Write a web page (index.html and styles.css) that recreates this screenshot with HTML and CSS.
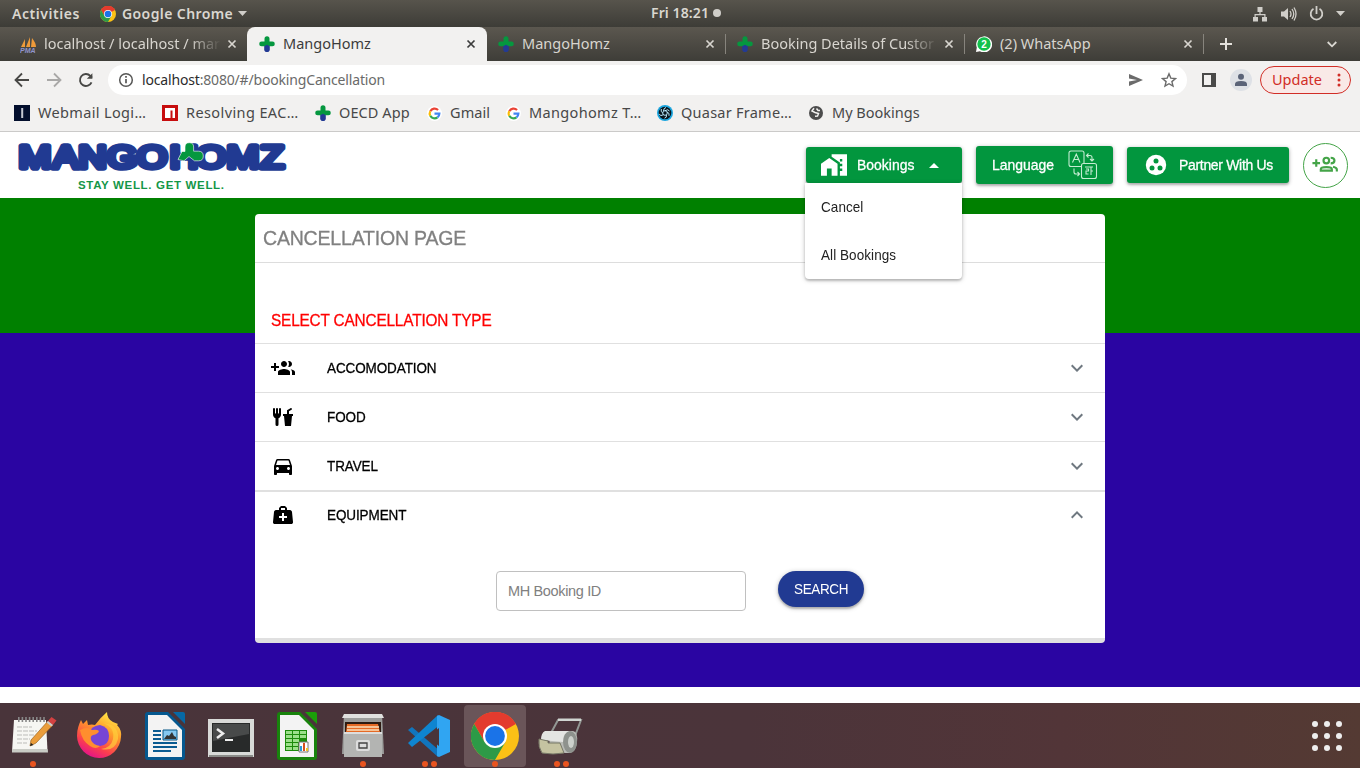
FILE: index.html
```html
<!DOCTYPE html>
<html lang="en">
<head>
<meta charset="utf-8">
<title>MangoHomz</title>
<link rel="stylesheet" href="styles.css">
</head>
<body>
<svg class="defs" width="0" height="0">
  <defs>
    <symbol id="clover" viewBox="0 0 16 16"><rect x="5.200" y="7" width="5.600" height="9" rx="2.800" fill="#233a94"/><path d="M5.500 5.500V2.800a2.500 2.500 0 0 1 5 0v2.700H13.400a2.400 2.400 0 0 1 0 4.800H11L8 8.800 5 10.300H2.600a2.400 2.400 0 0 1 0-4.800z" fill="#05973f"/></symbol>
    <symbol id="close" viewBox="0 0 10 10"><path d="M1.500 1.500l7 7m0-7l-7 7" fill="none" stroke="currentColor" stroke-width="1.700"/></symbol>
    <symbol id="chrome" viewBox="0 0 48 48"><circle cx="24" cy="24" r="24" fill="#fbc116"/><path d="M24 24L3.200 12A24 24 0 0 1 44.800 12z" fill="#e33b2e"/><path d="M24 12h20.800A24 24 0 0 0 3.200 12L13.600 30z" fill="#e33b2e"/><path d="M3.200 12A24 24 0 0 0 24 48L34.400 30 24 24 13.600 30z" fill="#2d9a47"/><circle cx="24" cy="24" r="12" fill="#fff"/><circle cx="24" cy="24" r="9.900" fill="#1a73e8"/></symbol>
    <symbol id="google" viewBox="0 0 16 16"><circle cx="8" cy="8" r="8" fill="#fff"/><g fill="none" stroke-width="2.300"><path d="M11.800 4.300A5.200 5.200 0 0 0 3.500 5.500" stroke="#ea4335"/><path d="M3.500 5.500a5.200 5.200 0 0 0 0 5" stroke="#fbbc05"/><path d="M3.500 10.500a5.200 5.200 0 0 0 7.700 1.600" stroke="#34a853"/><path d="M11.200 12.100A5.200 5.200 0 0 0 13.200 8.200H8" stroke="#4285f4"/></g></symbol>
    <symbol id="chev" viewBox="0 0 24 24"><path d="M16.590 8.590L12 13.170 7.410 8.590 6 10l6 6 6-6z" fill="currentColor"/></symbol>
  </defs>
</svg>

<div class="topbar">
  <span class="t-activities">Activities</span>
  <svg class="i16" width="16" height="16"><use href="#chrome"/></svg>
  <span class="t-app">Google Chrome</span>
  <svg width="9" height="5"><path d="M0 0h9L4.500 5z" fill="#d0cec9"/></svg>
  <div class="clock"><span>Fri 18:21</span><i></i></div>
  <div class="tray">
    <svg width="16" height="16" viewBox="0 0 16 16" fill="#d0cec9"><path d="M5.500 1h5v5H8.600v2H13.500v3H15v4.500h-5V11h2.300V9.200H3.700V11H6v4.500H1V11h1.500V8h4.900V6H5.500z"/></svg>
    <svg width="17" height="16" viewBox="0 0 17 16"><path d="M1 5.500h3L8 2v12L4 10.500H1z" fill="#d0cec9"/><path d="M10 5q2 3 0 6M12 3q3.500 5 0 10M14 1.500q4 6.500 0 13" fill="none" stroke="#d0cec9" stroke-width="1.300"/></svg>
    <svg width="15" height="16" viewBox="0 0 15 16" fill="none" stroke="#d0cec9" stroke-width="1.800"><path d="M4.500 2.800a5.800 5.800 0 1 0 6 0M7.500 0v8"/></svg>
    <svg width="9" height="5"><path d="M0 0h9L4.500 5z" fill="#d0cec9"/></svg>
  </div>
</div>

<div class="tabs">
  <div class="tab tab1">
    <svg class="fav" width="17" height="17" viewBox="0 0 17 17"><path d="M1 11l4-8v8zM6 11l4-10v10zM11 11l1-9q4 5 4 9z" fill="#ee9a3a"/><text x="0" y="16.500" class="pma">PMA</text></svg>
    <span class="tt fade w1">localhost / localhost / mar</span>
    <svg class="x" width="10" height="10"><use href="#close"/></svg>
  </div>
  <div class="tab active">
    <svg class="fav" width="16" height="16"><use href="#clover"/></svg>
    <span class="tt">MangoHomz</span>
    <svg class="x" width="10" height="10"><use href="#close"/></svg>
  </div>
  <div class="tab tab3">
    <svg class="fav" width="16" height="16"><use href="#clover"/></svg>
    <span class="tt">MangoHomz</span>
    <svg class="x" width="10" height="10"><use href="#close"/></svg>
  </div>
  <div class="tab tab4">
    <svg class="fav" width="16" height="16"><use href="#clover"/></svg>
    <span class="tt fade w4">Booking Details of Custor</span>
    <svg class="x" width="10" height="10"><use href="#close"/></svg>
  </div>
  <div class="tab tab5">
    <svg class="fav" width="16" height="16" viewBox="0 0 16 16"><path d="M0 16l.8-4.500A8 8 0 1 1 4 15.200z" fill="#fff"/><circle cx="8" cy="8" r="6.700" fill="#12c14c"/><text x="5.300" y="11.500" class="two">2</text></svg>
    <span class="tt">(2) WhatsApp</span>
    <svg class="x" width="10" height="10"><use href="#close"/></svg>
  </div>
  <svg class="plus" width="12" height="12"><path d="M6 0v12M0 6h12" stroke="#e4e1dc" stroke-width="2"/></svg>
  <svg class="more" width="10" height="7"><path d="M.7 1L5 5.300 9.300 1" fill="none" stroke="#dad8d2" stroke-width="1.800"/></svg>
</div>

<div class="toolbar">
  <svg width="16" height="16" fill="none" stroke="#484846" stroke-width="1.800"><path d="M15 8H2M8 1.500L1.500 8 8 14.500"/></svg>
  <svg width="16" height="16" fill="none" stroke="#a9a8a7" stroke-width="1.800"><path d="M1 8h13M8 1.500L14.500 8 8 14.500"/></svg>
  <svg width="16" height="16" fill="none" stroke="#484846" stroke-width="1.900"><path d="M13.500 10.300A6 6 0 1 1 12.300 3.800L14 5.600"/><path d="M14.400 1.200v5.600H8.800z" fill="#484846" stroke="none"/></svg>
  <div class="omni">
    <svg width="16" height="16" fill="none" stroke="#575756" stroke-width="1.500"><circle cx="8" cy="8" r="6.300"/><path d="M8 7v4.300M8 4v1.700" stroke-width="1.700"/></svg>
    <span class="url"><b>localhost</b>:8080/#/bookingCancellation</span>
    <svg class="send" width="16" height="14"><path d="M1 1l14 6L1 13V8.500L9 7 1 5.500z" fill="#6b6b6b"/></svg>
    <svg width="16" height="16" viewBox="0 0 16 16"><path d="M8 1.800l1.800 4.300 4.700.4-3.600 3.100 1.100 4.500L8 11.700l-4 2.400 1.100-4.500-3.600-3.100 4.700-.4z" fill="none" stroke="#6b6b6b" stroke-width="1.400"/></svg>
  </div>
  <svg class="panel" width="14" height="14"><path d="M1 1h12v12H1z" fill="none" stroke="#4a4a49" stroke-width="2"/><path d="M9 0h5v14H9z" fill="#4a4a49"/></svg>
  <svg class="avatar" width="22" height="22"><circle cx="11" cy="11" r="11" fill="#dee1e6"/><circle cx="11" cy="7.800" r="3" fill="#5a6378"/><path d="M5 17v-2q0-3 6-3t6 3v2z" fill="#5a6378"/></svg>
  <div class="update"><span>Update</span><svg width="4" height="14" fill="#d12d26"><circle cx="2" cy="2" r="1.500"/><circle cx="2" cy="7" r="1.500"/><circle cx="2" cy="12" r="1.500"/></svg></div>
</div>

<div class="marks">
  <div class="mark m1"><svg width="16" height="16"><path d="M0 0h16v16H0z" fill="#030f2d"/><path d="M7.200 3h2v10h-2z" fill="#c4c8d2"/></svg><span>Webmail Logi…</span></div>
  <div class="mark m2"><svg width="16" height="16"><path d="M0 0h16v16H0z" fill="#c70d0e"/><path d="M3 3h10v10h-2.500V5.500h-2V13H3z" fill="#fff"/></svg><span>Resolving EAC…</span></div>
  <div class="mark m3"><svg width="16" height="16"><use href="#clover"/></svg><span>OECD App</span></div>
  <div class="mark m4"><svg width="15" height="15"><use href="#google"/></svg><span>Gmail</span></div>
  <div class="mark m5"><svg width="15" height="15"><use href="#google"/></svg><span>Mangohomz T…</span></div>
  <div class="mark m6"><svg width="16" height="16" viewBox="0 0 16 16"><circle cx="8" cy="8" r="8" fill="#1ba6df"/><circle cx="8" cy="8" r="6.300" fill="#06131c"/><g fill="none" stroke="#b9e9fb" stroke-width="1"><circle cx="8" cy="8" r="2.300"/><path d="M8 5.700q3-2 4.500.3M10 7q3 1 2 3.800M9.500 9.800q.5 3-2 3.400M6.500 9.700q-3 2-4.300-.5M5.800 8q-2.500-1-1.500-4M6.500 6q0-3 2.500-3.500"/></g></svg><span>Quasar Frame…</span></div>
  <div class="mark m7"><svg width="14" height="14" viewBox="0 0 14 14"><circle cx="7" cy="7" r="7" fill="#4c4c4c"/><path d="M5 2.200L3 5l3 1.500 3.500 1-1 2.500-2.500.3M7.500 2.500L9 4.500h2" fill="none" stroke="#f2f1f0" stroke-width="1.500"/></svg><span>My Bookings</span></div>
</div>

<header class="site">
  <svg class="logo" width="300" height="66" viewBox="0 0 300 66">
    <g transform="scale(1.250 1)"><text y="36" x="28 52.600 74 97.600 121.600 147.200 168.800 194.400 217.600" class="brand">MANGOHOMZ</text></g>
    <path d="M178 27.500l4-8h3V15q0-4.300 4.300-4.300t4.300 4.300v4.200h4.900q4.800 0 4.800 4.800t-4.800 4.800h-4l-5.500-4.300-5 4.300z" fill="#05973f" stroke="#fff" stroke-width=".6"/>
    <text x="78" y="57" class="tagline" textLength="146">STAY WELL. GET WELL.</text>
  </svg>
  <div class="booking">
    <button class="btn b-book"><svg width="26" height="24" viewBox="1 2 22 20" fill="#fff"><path d="M1 11v10h5v-6h4v6h5V11L8 6z"/><path fill-rule="evenodd" d="M10 3v1.970l7 5V11h2v2h-2v2h2v2h-2v4h6V3zm9 6h-2V7h2z"/></svg><span class="cond">Bookings</span><svg width="10" height="5"><path d="M0 5h10L5 0z" fill="#fff"/></svg></button>
    <div class="menu"><div><span class="cond">Cancel</span></div><div><span class="cond">All Bookings</span></div></div>
  </div>
  <button class="btn b-lang"><span class="cond">Language</span>
    <svg width="30" height="30" viewBox="0 0 30 30" fill="none" stroke="#c4ecd1" stroke-width="1.100"><path d="M14 16.500H3a2 2 0 0 1-2-2V3a2 2 0 0 1 2-2h11a2 2 0 0 1 2 2v10M4.500 12.500L8.300 4 12 12.500M6 9.500h4.800"/><rect x="13.500" y="13.500" width="15" height="15" rx="2"/><path d="M17 17h8M23 17v8M18 19h2.500v2H18v3h2.500M23 21h2M18.500 5.500H22a2 2 0 0 1 2 2V11M20.500 3.500l-2 2 2 2M22 9l2 2 2-2M6 18.500v3.500a2 2 0 0 0 2 2h3M9.500 22l2 2-2 2"/></svg>
  </button>
  <button class="btn b-partner"><svg width="24" height="24" viewBox="0 0 24 24"><circle cx="12" cy="12" r="10.200" fill="#fff"/><g fill="#02963e"><circle cx="12" cy="8" r="2.500"/><circle cx="8" cy="15" r="2.500"/><circle cx="16" cy="15" r="2.500"/></g></svg><span class="cond">Partner With Us</span></button>
  <div class="round"><svg width="30" height="26" viewBox="0 0 26 24" fill="none" stroke="#44a448" stroke-width="2"><path d="M4 5.800v7M.5 9.300h7"/><circle cx="13.300" cy="7" r="2.600"/><path d="M8.200 16.200V15c0-2.600 10.200-2.600 10.200 0v1.200zM17.300 4.400q3.500 0 3.500 2.600t-3.500 2.600M19.500 12.700q3.500 1 3.500 2.500V17"/></svg></div>
</header>

<main class="stage">
  <section class="card">
    <h1><span class="cond">CANCELLATION PAGE</span></h1>
    <h2><span class="cond">SELECT CANCELLATION TYPE</span></h2>
    <div class="row"><svg class="ic" width="24" height="24" viewBox="0 0 24 24"><path d="M8 10H5V7H3v3H0v2h3v3h2v-3h3v-2zm10 1c1.660 0 2.990-1.340 2.990-3S19.660 5 18 5c-.32 0-.63.05-.91.14.57.81.9 1.790.9 2.860s-.34 2.040-.9 2.860c.28.09.59.14.91.14zm-5 0c1.660 0 2.990-1.340 2.990-3S14.660 5 13 5s-3 1.340-3 3 1.340 3 3 3zm6.620 2.160c.83.73 1.380 1.660 1.380 2.840v3h3v-3c0-1.540-2.370-2.490-4.380-2.840zM13 13c-2 0-6 1-6 3v3h12v-3c0-2-4-3-6-3z"/></svg><span class="cond">ACCOMODATION</span><svg class="ch" width="24" height="24"><use href="#chev"/></svg></div>
    <div class="row"><svg class="ic" width="24" height="24" viewBox="0 0 24 24"><path d="M3 3A1 1 0 0 0 2 4V8L2 9.500C2 11.190 3.030 12.630 4.500 13.220V19.500A1.500 1.500 0 0 0 6 21A1.500 1.500 0 0 0 7.500 19.500V13.220C8.970 12.630 10 11.190 10 9.500V8L10 4A1 1 0 0 0 9 3A1 1 0 0 0 8 4V8A.5.5 0 0 1 7.500 8.500A.5.5 0 0 1 7 8V4A1 1 0 0 0 6 3A1 1 0 0 0 5 4V8A.5.5 0 0 1 4.500 8.500A.5.5 0 0 1 4 8V4A1 1 0 0 0 3 3M19.880 3C19.750 3 19.620 3.090 19.500 3.160L16 5.250V9H12V11H13L14 21H20L21 11H22V9H18V6.340L20.500 4.840C21 4.560 21.130 4 20.840 3.500C20.630 3.140 20.260 2.950 19.880 3Z"/></svg><span class="cond">FOOD</span><svg class="ch" width="24" height="24"><use href="#chev"/></svg></div>
    <div class="row"><svg class="ic" width="24" height="24" viewBox="0 0 24 24"><path d="M18.920 6.010C18.720 5.420 18.160 5 17.500 5h-11c-.66 0-1.210.42-1.420 1.010L3 12v8c0 .55.45 1 1 1h1c.55 0 1-.45 1-1v-1h12v1c0 .55.45 1 1 1h1c.55 0 1-.45 1-1v-8l-2.080-5.990zM6.500 16c-.83 0-1.500-.67-1.500-1.500S5.670 13 6.500 13s1.500.67 1.500 1.500S7.330 16 6.500 16zm11 0c-.83 0-1.500-.67-1.500-1.500s.67-1.500 1.500-1.500 1.500.67 1.500 1.500-.67 1.500-1.500 1.500zM5 11l1.500-4.500h11L19 11H5z"/></svg><span class="cond">TRAVEL</span><svg class="ch" width="24" height="24"><use href="#chev"/></svg></div>
    <div class="row open"><svg class="ic" width="24" height="24" viewBox="0 0 24 24"><path d="M10 3L8 5V7H5C3.850 7 3.120 8 3 9L2 19C1.880 20 2.540 21 4 21H20C21.460 21 22.120 20 22 19L21 9C20.880 8 20.060 7 19 7H16V5L14 3H10M10 5H14V7H10V5M11 10H13V13H16V15H13V18H11V15H8V13H11V10Z"/></svg><span class="cond">EQUIPMENT</span><svg class="ch" width="24" height="24"><use href="#chev"/></svg></div>
    <div class="form"><input class="field" type="text" placeholder="MH Booking ID"><button class="search"><span class="cond">SEARCH</span></button></div>
  </section>
</main>

<footer class="dock">
  <div class="app"><svg width="48" height="48" viewBox="0 0 48 48"><path d="M5 8h32l1.500 31.500H3z" fill="#f6f6f3"/><path d="M3 37h35.500l.5 3.500H3z" fill="#c9cbc5"/><path d="M9 7.500h27" stroke="#888" stroke-width="5" stroke-dasharray="1.600 2"/><path d="M8 15h15M8 19h20M8 23h18M8 27h13M8 31h10" stroke="#bbbbb8" stroke-dasharray="5 1"/><path d="M22 28L39 9l5 4-17 18-6 3z" fill="#eb9d3b" stroke="#9c631f" stroke-width=".7"/><path d="M39 9l3.500-4 5 3.500L44 13z" fill="#d34141"/><path d="M37.500 10.500L39 9l5 4-1.500 1.500z" fill="#ccc"/><path d="M21 34l1-3 2.500 2z" fill="#222"/></svg><i></i></div>
  <div class="app"><svg width="48" height="48" viewBox="0 0 48 48"><defs><linearGradient id="fx" x1=".8" y1="0" x2=".3" y2="1"><stop offset="0" stop-color="#fff34a"/><stop offset=".4" stop-color="#ff9a2a"/><stop offset=".75" stop-color="#fb3f4e"/><stop offset="1" stop-color="#e3108d"/></linearGradient></defs><path d="M2 24C2 17 4 12 6 8l2 4 4-4 1 5q4-1 7 0Q26 5 32 0q0 7 6 10l5 2-1 1q5 5 4 12A22 22 0 0 1 24 46 22.300 22.300 0 0 1 2 24z" fill="url(#fx)"/><path d="M14 25q0-11 11-12 9 2 9 11t-9 10q-10 0-11-9z" fill="#7645d5"/><path d="M5 18q7-4 12 0 5-1 7 1-1 3-6 4-3 1-2 5 2 5 9 6-4 4-10 0-8-5-10-16z" fill="#ff8e2e"/><path d="M28 11q12 4 10 16-2 9-12 10 14 3 17-10 1-9-6-14z" fill="#ffcf3c" opacity=".7"/></svg></div>
  <div class="app"><svg width="48" height="48" viewBox="0 0 48 48"><path d="M7 0h20l17 17v28q0 3-3 3H7q-3 0-3-3V3q0-3 3-3z" fill="#05588f"/><path d="M32 0h10q2 0 2 2v10z" fill="#0769a5"/><path d="M7 3h19l15 15v27H7z" fill="#f3f3f3"/><path d="M12 19h8M12 23h8M12 27h8M12 31h24M12 35h24M12 39h18" stroke="#0a5b91" stroke-width="2"/><path d="M22 18h14v10H22z" fill="#85c8f0" stroke="#075786"/><path d="M23 27l3-4 2 1 3-4 2 4 2 1v2z" fill="#333"/></svg></div>
  <div class="app"><svg width="48" height="48" viewBox="0 0 48 48"><path d="M1 7h46v38H1z" fill="#d9dad8"/><path d="M2 43h44v2H2z" fill="#8a8b88"/><path d="M5 11h38v29H5z" fill="#282a2a"/><path d="M6 12h36v10L6 29z" fill="#484a4a"/><path d="M10 17l6 4.500-6 4.500" fill="none" stroke="#eee" stroke-width="2.500"/><path d="M18 28h8" stroke="#eee" stroke-width="2"/></svg></div>
  <div class="app"><svg width="48" height="48" viewBox="0 0 48 48"><path d="M7 0h20l17 17v28q0 3-3 3H7q-3 0-3-3V3q0-3 3-3z" fill="#18830c"/><path d="M32 0h10q2 0 2 2v10z" fill="#1b9f09"/><path d="M7 3h19l15 15v27H7z" fill="#f3f3f3"/><path d="M12 18h22v21H12z" fill="#1b8b0a"/><path d="M13 19h6v3h-6zm7 0h6v3h-6zm7 0h6v3h-6zM13 23h6v3h-6zm7 0h6v3h-6zm7 0h6v3h-6zM13 27h6v3h-6zm7 0h6v3h-6zM13 31h6v3h-6zm7 0h5v3h-5zM13 35h6v3h-6zm7 0h5v3h-5z" fill="#9be08a"/><path d="M26 30h9v10h-9z" fill="#fff" stroke="#777"/><path d="M27 34h2v5h-2z" fill="#2d9bd8"/><path d="M30 31h2v8h-2z" fill="#d6501d"/><path d="M33 36h2v3h-2z" fill="#eec424"/></svg></div>
  <div class="app"><svg width="48" height="48" viewBox="0 0 48 48"><path d="M5 2h38l2 40H3z" fill="#9c9d9b"/><path d="M5 2h38l2 4H3z" fill="#e0e0de"/><path d="M6 10h36v12H6z" fill="#2d1b12"/><path d="M8 12h31l2 8H7z" fill="#e56a25"/><path d="M8 15h32M8 18h32" stroke="#fae1bd" stroke-width="1.300"/><path d="M5 20h38v25H5z" fill="#b3b4b2"/><path d="M5 20h38v2H5z" fill="#ddd"/><rect x="17" y="28" width="14" height="11" rx="2" fill="#ddd"/><path d="M20 31h8v5h-8z" fill="#ddd" stroke="#444" stroke-width="1.300"/></svg><i></i></div>
  <div class="app"><svg width="48" height="48" viewBox="0 0 48 48"><path d="M3 18l4-3 28 24-2 6z" fill="#1175bd"/><path d="M3 31l4 4L36 12 33 3z" fill="#0e85d0"/><path d="M34 3l11 5v32l-11 5-2-1V4z" fill="#30a5f2"/><path d="M34 16L22 25l12 9z" fill="#49343a"/></svg><i></i><i></i></div>
  <div class="app current"><svg width="48" height="48"><use href="#chrome"/></svg><i></i></div>
  <div class="app"><svg width="48" height="48" viewBox="0 0 48 48"><path d="M14 21L21 8h23L36 29" fill="none" stroke="#929793" stroke-width="2"/><path d="M21 6.500h23v2.500H21z" fill="#d0d5d1"/><path d="M12 19h24q5 1 4 11t-7 11H13z" fill="#b9bbb6"/><ellipse cx="33" cy="30" rx="7" ry="11" fill="#8e928d"/><ellipse cx="34" cy="30" rx="3" ry="6" fill="#ccd0cb"/><path d="M8 19h24q-6 2-6 11L4 28q0-7 4-9z" fill="#e4e5e2"/><path d="M2 27l9 2v2h12l4 10q-11 2-22 0-4-6-3-14z" fill="#c5c3a1" stroke="#777867"/></svg><i></i><i></i></div>
  <svg class="grid" width="30" height="30" viewBox="0 0 30 30" fill="#eee"><circle cx="3" cy="3" r="3"/><circle cx="15" cy="3" r="3"/><circle cx="27" cy="3" r="3"/><circle cx="3" cy="15" r="3"/><circle cx="15" cy="15" r="3"/><circle cx="27" cy="15" r="3"/><circle cx="3" cy="27" r="3"/><circle cx="15" cy="27" r="3"/><circle cx="27" cy="27" r="3"/></svg>
</footer>
</body>
</html>
```
FILE: styles.css
```css
* { box-sizing: border-box; }
body { margin: 0; width: 1360px; height: 768px; overflow: hidden; background: #fff; font-family: "Liberation Sans", Arial, sans-serif; display: flex; flex-direction: column; }
svg { display: block; flex: none; }
.defs { position: absolute; }
span { white-space: nowrap; }
.cond { display: inline-block; transform: scaleX(.93); transform-origin: left; }

.topbar, .tabs, .toolbar, .marks { font-family: "Noto Sans", sans-serif; display: flex; align-items: center; flex: none; }
.topbar { height: 27px; background: linear-gradient(#57544c, #3d3c37); color: #dad7d0; font-size: 14px; font-weight: 600; position: relative; padding: 0 15px 0 12px; }
.t-activities { width: 88px; letter-spacing: .55px; }
.t-app { width: 116px; margin-left: 6px; letter-spacing: .4px; }
.clock { position: absolute; left: 651px; top: 0; height: 25px; display: flex; align-items: center; gap: 4px; letter-spacing: .1px; }
.clock i { width: 8px; height: 8px; border-radius: 4px; background: #d0cec9; }
.tray { margin-left: auto; display: flex; align-items: center; gap: 12px; }

.tabs { height: 34px; background: linear-gradient(#5b574f, #3e3d38); color: #d8d5cf; font-size: 14.5px; }
.tab { height: 34px; display: flex; align-items: center; padding-left: 11px; width: 239px; padding-right: 11px; position: relative; }
.tab1 { width: 247px; padding-left: 20px; padding-right: 10px; }
.active { width: 240px; padding-left: 12px; background: #f2f1f0; color: #3c3c3c; border-radius: 8px 8px 0 0; }
.tab .tt { margin-left: 8px; padding-bottom: 2px; overflow: hidden; }
.tab1 .tt { margin-left: 7px; }
.x { margin-left: auto; }
.w1 { width: 177px; }
.w4 { width: 177px; }
.fade { -webkit-mask-image: linear-gradient(90deg, #000 82%, transparent); mask-image: linear-gradient(90deg, #000 82%, transparent); }
.tab3, .tab4, .tab5 { background: linear-gradient(#87847d, #87847d) right 7px / 1px 20px no-repeat; }
.pma { font: italic bold 7px "Liberation Sans", sans-serif; fill: #9094cc; }
.two { font: bold 10px "Liberation Sans", sans-serif; fill: #fff; }
.plus { margin-left: 16px; }
.more { margin-left: auto; margin-right: 23px; }

.toolbar { height: 38px; background: #f2f1f0; padding: 0 9px 0 14px; gap: 16px; }
.omni { width: 1079px; height: 30px; border-radius: 15px; background: #fff; display: flex; align-items: center; padding: 0 10px; font-size: 14px; color: #6a6a69; margin: 0 -1px 0 -2px; }
.url { margin-left: 8px; letter-spacing: -.17px; padding-bottom: 2px; }
.url b { font-weight: 400; color: #2c2c2c; }
.send { margin-left: auto; margin-right: 17px; }
.avatar { margin-left: -2px; }
.update { margin-left: -8px; width: 91px; height: 28px; flex: none; border: 1px solid #d12d26; border-radius: 14px; background: #f9e9e7; color: #d12d26; font-size: 14.500px; display: flex; align-items: center; justify-content: space-between; padding: 0 9px 0 11px; }
.update span { padding-bottom: 2px; }

.marks { height: 33px; background: #f2f1f0; border-bottom: 1px solid #cbcac9; padding: 0 0 4px 14px; font-size: 14.5px; color: #484848; }
.mark { display: flex; align-items: center; gap: 8px; letter-spacing: .08px; }
.mark span { padding-bottom: 2px; }
.m1 { width: 148px; letter-spacing: .35px; } .m2 { width: 153px; letter-spacing: .4px; } .m3 { width: 112px; } .m4 { width: 79px; } .m5 { width: 151px; letter-spacing: .35px; } .m6 { width: 152px; letter-spacing: .25px; }
.m7 { gap: 9px; letter-spacing: 0; }

.site { height: 66px; display: flex; flex: none; position: relative; background: #fff; }
.brand { font: 31px "Liberation Sans", sans-serif; fill: #213a92; stroke: #213a92; stroke-width: 5.600px; stroke-linejoin: round; stroke-linecap: round; text-anchor: middle; }
.tagline { font: bold 11.500px "Liberation Sans", sans-serif; fill: #149647; }
.booking { margin-left: 506px; margin-top: 15px; width: 156px; position: relative; z-index: 2; }
.btn { border: 0; background: #02963e; color: #fff; border-radius: 3px; height: 36px; display: flex; align-items: center; padding: 0; font: 15px "Liberation Sans", sans-serif; -webkit-text-stroke: .3px #fff; box-shadow: 0 1px 4px rgba(0,0,0,.3), 0 2px 2px rgba(0,0,0,.15); }
.btn .cond { padding-bottom: 2px; }
.b-book { width: 156px; padding: 0 23px 0 15px; }
.b-book span { margin: 0 auto 0 10px; }
.b-lang { width: 137px; height: 38px; margin: 14px 0 0 14px; padding: 0 15px 0 16px; justify-content: space-between; }
.b-partner { width: 162px; margin: 15px 0 0 14px; padding: 0 16px 0 17px; justify-content: space-between; letter-spacing: -.33px; }
.b-partner .cond { transform-origin: right; }
.menu { position: absolute; left: -1px; top: 36px; width: 157px; height: 96px; background: #fff; border-radius: 0 0 4px 4px; box-shadow: 0 1px 5px rgba(0,0,0,.25), 0 2px 2px rgba(0,0,0,.15); font-size: 14.500px; letter-spacing: .08px; color: #222; }
.menu div { height: 48px; line-height: 48px; padding-left: 16px; }
.round { width: 45px; height: 45px; margin: 11px 0 0 14px; border: 1px solid #44a448; border-radius: 50%; display: flex; align-items: center; justify-content: center; }

.stage { height: 489px; flex: none; background: linear-gradient(#008000 135px, #2a05a2 135px); padding: 16px 255px 0; margin-bottom: 16px; }
.card { height: 429px; background: #fff; border-radius: 4px; border-bottom: 5px solid #e0e0e0; }
h1 { margin: 0; height: 49px; line-height: 48px; padding-left: 8px; font-size: 21px; font-weight: 400; letter-spacing: -.22px; color: #808080; -webkit-text-stroke: .3px #808080; border-bottom: 1px solid #ddd; }
h2 { margin: 0; height: 80px; line-height: 16px; padding: 49px 0 0 16px; font-size: 16.500px; font-weight: 400; letter-spacing: -.17px; color: #f00; -webkit-text-stroke: .3px #f00; }
.row { height: 49px; border-top: 1px solid #e0e0e0; display: flex; align-items: center; padding: 0 16px; font-size: 14.500px; letter-spacing: -.1px; color: #000; -webkit-text-stroke: .3px #000; }
.row .cond { padding-bottom: 1px; }
.row .ic { margin-right: 32px; }
.row .ch { margin-left: auto; color: #6f7880; }
.row.open { border-top-width: 2px; padding-bottom: 1px; }
.open .ch { transform: rotate(180deg); }
.form { display: flex; padding: 32px 0 0 241px; }
.field { width: 250px; height: 40px; border: 1px solid #c0c0c0; border-radius: 4px; padding: 0 11px; font: 14.500px "Liberation Sans", sans-serif; letter-spacing: -.35px; background: #fff; }
.field::placeholder { color: #808080; }
.search { margin-left: 32px; width: 86px; height: 36px; border: 0; border-radius: 18px; background: #213a92; color: #fff; font: 14.500px "Liberation Sans", sans-serif; letter-spacing: -.4px; padding: 0; box-shadow: 0 1px 5px rgba(0,0,0,.25), 0 2px 2px rgba(0,0,0,.2); }
.search .cond { transform-origin: center; }

.dock { height: 65px; flex: none; background: linear-gradient(90deg, #49343a, #4b343a 55%, #523538 78%, #543a33); display: flex; align-items: center; padding: 0 18px 0 2px; gap: 4px; }
.app { width: 62px; height: 62px; padding-top: 7px; border-radius: 4px; display: flex; flex-wrap: wrap; justify-content: center; align-content: flex-start; column-gap: 3px; }
.app svg { margin: 0 7px; }
.app i { width: 6px; height: 6px; border-radius: 3px; background: #e95420; margin-top: 1px; }
.current { background: #6a5559; }
.grid { margin-left: auto; }
```
